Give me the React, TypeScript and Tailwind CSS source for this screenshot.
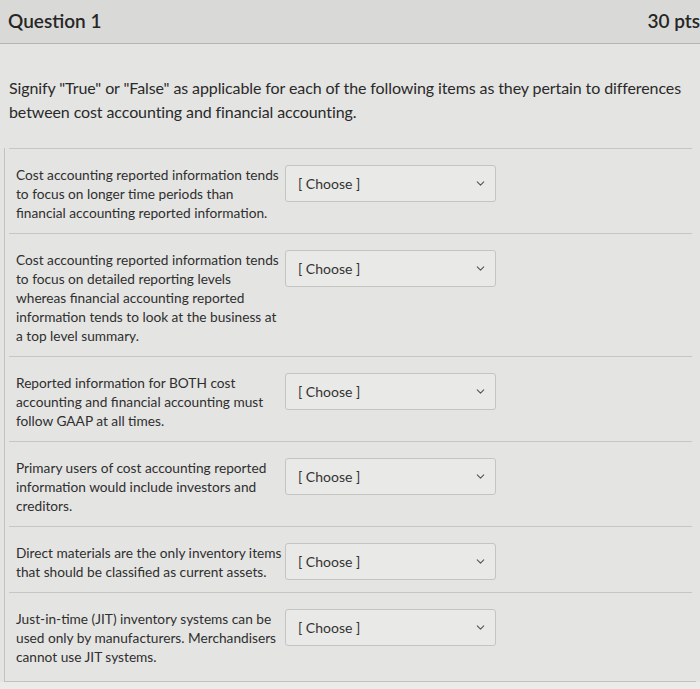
import React from "react";
import { ChevronDown } from "lucide-react";

const ITEMS = [
  {
    text: "Cost accounting reported information tends to focus on longer time periods than financial accounting reported information.",
  },
  {
    text: "Cost accounting reported information tends to focus on detailed reporting levels whereas financial accounting reported information tends to look at the business at a top level summary.",
  },
  {
    text: "Reported information for BOTH cost accounting and financial accounting must follow GAAP at all times.",
  },
  {
    text: "Primary users of cost accounting reported information would include investors and creditors.",
  },
  {
    text: "Direct materials are the only inventory items that should be classified as current assets.",
  },
  {
    text: "Just-in-time (JIT) inventory systems can be used only by manufacturers. Merchandisers cannot use JIT systems.",
  },
];

const App: React.FC = () => {
  return (
    <div
      className="w-[700px] h-[689px] overflow-hidden bg-[#e4e4e2] text-[#2f2f2f]"
      style={{ fontFamily: "Lato, 'Open Sans', sans-serif" }}
    >
      {/* Header */}
      <div className="h-[44px] flex items-center justify-between pl-[8px] pr-0 bg-[#d9d9d7] border-b border-[#b4b4b2]">
        <span className="text-[19px] font-semibold text-[#262626]">Question 1</span>
        <span className="text-[19px] font-semibold text-[#262626]">30 pts</span>
      </div>

      {/* Prompt */}
      <p className="px-[9px] pt-[32px] text-[16px] leading-[24px] tracking-[-0.1px] text-[#2a2a2a]">
        Signify "True" or "False" as applicable for each of the following items as they pertain to
        differences between cost accounting and financial accounting.
      </p>

      {/* Answers */}
      <div className="mt-[24px] ml-[4px] w-[692px] border-l border-b border-[#c2c2c0] pb-[4px]">
        {ITEMS.map((item, i) => (
          <div key={i} className="mx-[4px] border-t border-[#c6c6c4] flex items-start pt-[16px] pb-[11px]">
            <div className="w-[276px] pl-[7px] pr-[1px] text-[13.7px] leading-[19px]">{item.text}</div>
            <div className="w-[211px] h-[37px] flex items-center justify-between pl-[12px] pr-[8px] border border-[#c4c4c2] rounded-[3px] bg-[#e9e9e7] text-[14px] text-[#333]">
              <span>[ Choose ]</span>
              <ChevronDown size={13} strokeWidth={2} className="text-[#555]" />
            </div>
          </div>
        ))}
      </div>
      <div className="h-full bg-[#ebebea]" />
    </div>
  );
};

export default App;
